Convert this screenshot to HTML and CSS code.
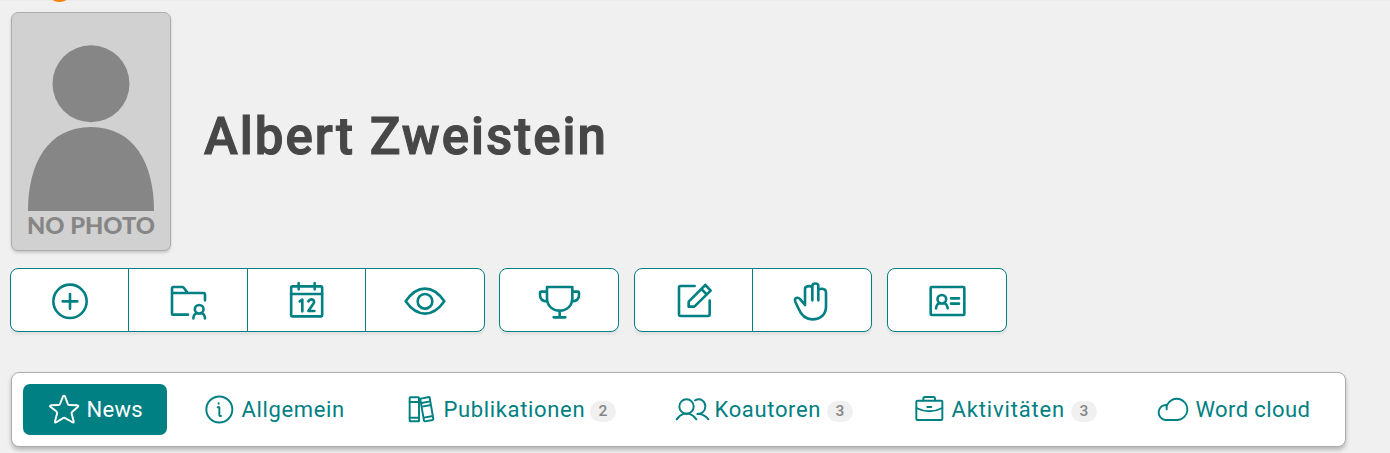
FILE: index.html
```html
<!DOCTYPE html>
<html lang="de">
<head>
<meta charset="utf-8">
<title>Albert Zweistein</title>
<link rel="stylesheet" href="styles.css">
</head>
<body>
<span class="accent-dot"></span>
<header class="profile">
  <svg class="photo" viewBox="0 0 158 237" role="img">
    <circle cx="79" cy="70.7" r="38.5"/>
    <path d="M16 198C16 150 36 114 79 114S142 150 142 198Z"/>
    <text x="15" y="221" textLength="128" lengthAdjust="spacingAndGlyphs">NO PHOTO</text>
  </svg>
  <h1 class="name">Albert Zweistein</h1>
</header>

<div class="toolbar">
  <div class="group group-four">
    <button class="action"><svg viewBox="120 54 180 132"><circle cx="210" cy="124" r="50"/><path d="M210 102v44M188 124h44"/></svg></button>
    <button class="action"><svg viewBox="474 54 180 132"><path d="M564 164h-46q-2 0-2-2V85q0-4 4-4h27q3 0 5 3l11 15h47q5 0 5 5v17M516 99h48"/><circle cx="597.500" cy="148" r="13"/><path d="M580 175q1-14 12-16M615 175q-1-14-12-16"/></svg></button>
    <button class="action"><svg viewBox="96 54 180 132"><rect x="138.500" y="79" width="93" height="90" rx="4"/><path d="M138 102h93M161 69v19M209 69v19M164 124l8-5v35M190 124q3-6 9-6c9 0 10 9 5 15l-14 20h18" /></svg></button>
    <button class="action"><svg viewBox="450 54 180 132"><path d="M482 124Q508 86 540 86T598 124Q572 161 540 161T482 124Z"/><circle cx="540" cy="124" r="22"/></svg></button>
  </div>
  <div class="group">
    <button class="action"><svg viewBox="117 54 180 132"><path d="M171 81h76v34c0 23-17 37-38 37s-38-14-38-37ZM171 95h-17q-4 0-4 4v5q0 20 22 20M247 95h16q4 0 4 4v5q0 20-22 20M209 153v19M191 172h35"/></svg></button>
  </div>
  <div class="group group-two">
    <button class="action"><svg viewBox="520 54 180 132"><path d="M612 78h-43q-4 0-4 4v81q0 5 5 5h82q5 0 5-5v-41M594 125l50-50 16 17-49 48h-17ZM632 87l16 16"/></svg></button>
    <button class="action"><svg viewBox="96 54 180 132"><path d="M187 121V78c0-10 18-10 18 0v43M187 121V84c0-8-22-8-22 3v47M205 121V92c0-8 23-9 23 5v43c0 22-15 38-42 38-20 0-33-14-41-33l-9-20c-5-12 8-15 15-7l14 17"/></svg></button>
  </div>
  <div class="group">
    <button class="action"><svg viewBox="501 54 180 132"><rect x="542" y="81" width="101" height="84" rx="3"/><circle cx="575.500" cy="118" r="13"/><path d="M558 145q2-14 12-16M593 145q-2-14-12-16M603 115h24M603 131h24"/></svg></button>
  </div>
</div>

<nav class="tabs">
  <a class="tab tab-news"><svg viewBox="144 78 117 108"><path d="M192 92Q194 91 196 97L204 118Q205 120 208 120L232 121Q238 122 233 126L217 140Q213 143 215 146L221 169Q222 175 216 171L197 160Q192 157 188 160L170 171Q164 175 165 169L171 146Q172 142 169 139L152 126Q147 122 153 121L176 120Q179 120 180 117L188 97Q190 91 192 92Z"/></svg><span class="label">News</span></a>
  <a class="tab tab-general"><svg viewBox="609 78 117 108"><circle cx="658" cy="133.500" r="39"/><path d="M656 115v1M653 127h5v22q0 4 5 4"/></svg><span class="label">Allgemein</span></a>
  <a class="tab tab-publications"><svg viewBox="45 78 117 108"><rect x="59" y="97" width="28" height="72" rx="2"/><path d="M59 111h28M59 158h28M93 101l24-5q2 0 2 2l11 64q0 2-2 3l-23 4q-2 0-3-2L91 104q0-2 2-3ZM94 114l27-5M96 125l27-5M102 158l27-5"/></svg><span class="label">Publikationen</span><span class="badge">2</span></a>
  <a class="tab tab-coauthors"><svg viewBox="48 78 117 108"><circle cx="79.500" cy="124.500" r="21.500"/><path d="M50 163q9-13 22-17h15q13 4 22 17M105 106c18-9 31 4 31 18 0 15-11 23-24 23h7c12 2 20 8 26 16"/></svg><span class="label">Koautoren</span><span class="badge">3</span></a>
  <a class="tab tab-activities"><svg viewBox="39 78 117 108"><rect x="49" y="107" width="78" height="58" rx="3"/><path d="M70 106v-5q0-5 5-5h25q5 0 5 5v5M49 129q39 20 78 0M82 126h12"/></svg><span class="label">Aktivitäten</span><span class="badge">3</span></a>
  <a class="tab tab-cloud"><svg viewBox="51 78 117 108"><path d="M80 133q-1-6 1-13a32 32 0 1 1 32 45H76a22.500 22.500 0 1 1 5-45"/></svg><span class="label">Word cloud</span></a>
</nav>
</body>
</html>
```
FILE: styles.css
```css
* { box-sizing: border-box; }
body {
  margin: 0;
  height: 453px;
  overflow: hidden;
  padding: 11px 0 0 10px;
  background: #f0f0f0;
  border-top: 1px solid #ebebeb;
  font-family: Roboto, "Liberation Sans", sans-serif;
}
.accent-dot {
  position: absolute;
  left: 46px;
  top: -25px;
  width: 27px;
  height: 27px;
  border-radius: 50%;
  background: #ff8000;
}
.profile { display: flex; margin-left: 1px; height: 239px; }
.photo {
  width: 160px;
  height: 239px;
  flex: none;
  background: #d1d1d1;
  border: 1px solid #acacac;
  border-radius: 7px;
  box-shadow: 0 2px 3px rgba(0, 0, 0, .16);
  fill: #868686;
}
.photo text { font: 900 22.5px Lato, sans-serif; }
.name {
  margin: 95px 0 0 33px;
  font-size: 51px;
  line-height: 60px;
  font-weight: 500;
  letter-spacing: 2px;
  -webkit-text-stroke: 1.1px #474747;
  color: #474747;
  white-space: nowrap;
}
.toolbar { display: flex; margin-top: 17px; }
.group {
  display: flex;
  width: 120px;
  height: 64px;
  margin-right: 15px;
  background: #fff;
  border: 1px solid #008083;
  border-radius: 8px;
  box-shadow: 0 3px 2px rgba(0, 0, 0, .06);
}
.group-four { width: 475px; margin-right: 14px; }
.group-two { width: 238px; }
.action {
  flex: 1;
  display: flex;
  justify-content: center;
  align-items: center;
  padding: 0;
  border: 0;
  background: none;
}
.group-four .action:first-child,
.group-two .action:first-child { flex: none; width: 117px; }
.action + .action { border-left: 1px solid #008083; }
.action svg { width: 60px; height: 44px; }
svg { overflow: visible; }
.action svg, .tab svg {
  flex: none;
  fill: none;
  stroke: currentColor;
  stroke-linecap: round;
  stroke-linejoin: round;
}
.action svg { stroke: #008083; stroke-width: 7.8; }
.tabs {
  display: flex;
  align-items: center;
  margin: 40px 0 0 1px;
  width: 1335px;
  height: 75px;
  padding-left: 11px;
  background: #fff;
  border: 1px solid #acacac;
  border-radius: 8px;
  box-shadow: 0 3px 4px rgba(0, 0, 0, .24);
}
.tab {
  display: flex;
  flex: none;
  align-items: center;
  height: 51px;
  color: #008083;
  font-size: 22px;
  line-height: 26px;
  letter-spacing: .65px;
  white-space: nowrap;
}
.tab svg { width: 39px; height: 36px; margin-bottom: 1px; stroke-width: 5.8; }
.label { margin-left: -.5px; }
.tab-news { width: 144px; padding-left: 25px; background: #008083; color: #fff; border-radius: 7px; letter-spacing: .3px; }
.tab-general { margin-left: 36px; width: 202px; }
.tab-publications { width: 271px; }
.tab-coauthors { width: 237px; }
.tab-activities { width: 244px; letter-spacing: .85px; }
.tab-cloud { letter-spacing: .4px; }
.tab-publications .label { width: 146.5px; }
.tab-coauthors .label { width: 112.5px; }
.tab-activities .label { width: 119.5px; }
.badge {
  width: 26px;
  height: 21px;
  margin-top: 3px;
  border-radius: 10.5px;
  background: #f0f0f0;
  color: #868686;
  font-size: 15.5px;
  line-height: 20px;
  font-weight: 500;
  letter-spacing: 0;
  text-align: center;
}
```
